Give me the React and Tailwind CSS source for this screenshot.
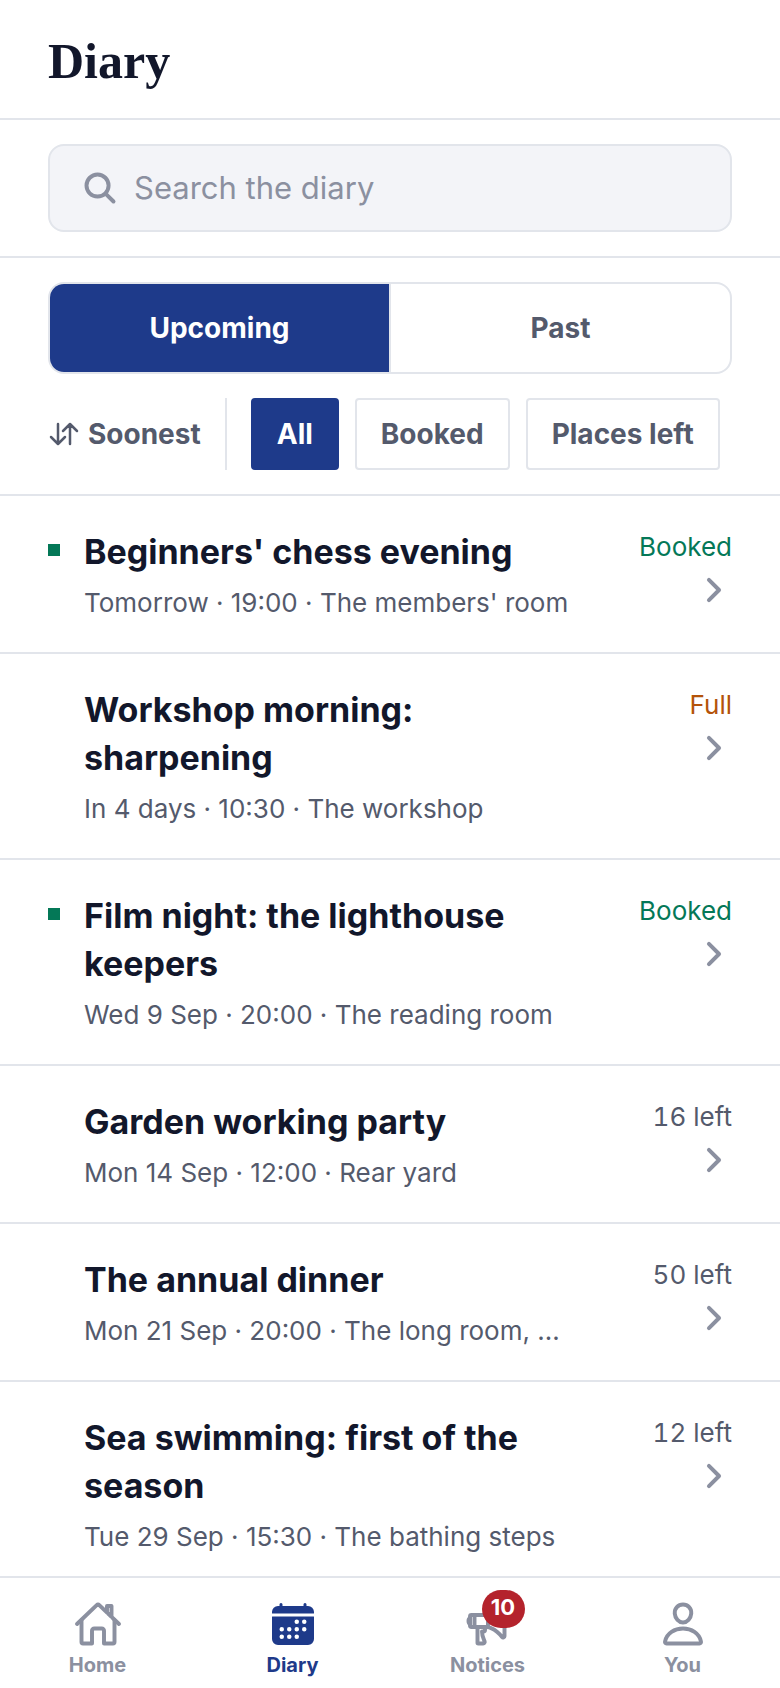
import {
  IoCalendar,
  IoChevronForwardOutline,
  IoHomeOutline,
  IoMegaphoneOutline,
  IoPersonOutline,
  IoSearchOutline,
  IoSwapVerticalOutline,
} from 'react-icons/io5';

const events = [
  {
    title: "Beginners' chess evening",
    meta: "Tomorrow · 19:00 · The members' room",
    status: 'Booked',
    tone: 'green',
  },
  {
    title: 'Workshop morning: sharpening',
    meta: 'In 4 days · 10:30 · The workshop',
    status: 'Full',
    tone: 'amber',
  },
  {
    title: 'Film night: the lighthouse keepers',
    meta: 'Wed 9 Sep · 20:00 · The reading room',
    status: 'Booked',
    tone: 'green',
  },
  {
    title: 'Garden working party',
    meta: 'Mon 14 Sep · 12:00 · Rear yard',
    status: '16 left',
    tone: 'gray',
  },
  {
    title: 'The annual dinner',
    meta: 'Mon 21 Sep · 20:00 · The long room, …',
    status: '50 left',
    tone: 'gray',
  },
  {
    title: 'Sea swimming: first of the season',
    meta: 'Tue 29 Sep · 15:30 · The bathing steps',
    status: '12 left',
    tone: 'gray',
  },
];

const toneClasses = {
  green: 'text-[#047857]',
  amber: 'text-[#b45309]',
  gray: 'text-[#545a6c]',
};

const tabs = [
  { label: 'Home', icon: IoHomeOutline },
  { label: 'Diary', icon: IoCalendar, active: true },
  { label: 'Notices', icon: IoMegaphoneOutline, badge: 10 },
  { label: 'You', icon: IoPersonOutline },
];

function Chip({ children, active = false }) {
  const stateClasses = active
    ? 'border-[#1e3a8a] bg-[#1e3a8a] text-white'
    : 'border-[#e2e5eb] bg-white text-[#545a6c]';

  return (
    <button
      type="button"
      aria-pressed={active}
      className={`h-[72px] shrink-0 rounded border-2 px-6 text-[28px] font-bold ${stateClasses}`}
    >
      {children}
    </button>
  );
}

function EventRow({ event }) {
  return (
    <li className="border-b-2 border-[#e2e5eb]">
      <a href="#event" className="flex items-start gap-6 px-12 pt-8 pb-[30px]">
        <div className="flex w-3 shrink-0 pt-4">
          {event.status === 'Booked' && <span className="size-3 bg-[#047857]" />}
        </div>
        <div className="min-w-0 flex-1">
          <h2 className="text-[34px] leading-[48px] font-bold">{event.title}</h2>
          <p className="mt-2 truncate text-[26px] leading-[38px] text-[#545a6c]">{event.meta}</p>
        </div>
        <div className="flex w-32 shrink-0 flex-col items-end gap-1.5">
          <span className={`text-[26px] leading-[38px] tabular-nums ${toneClasses[event.tone]}`}>
            {event.status}
          </span>
          <IoChevronForwardOutline className="size-9 text-[#8b90a0] [&_*]:stroke-[56px]" />
        </div>
      </a>
    </li>
  );
}

function TabBar() {
  return (
    <nav className="grid shrink-0 grid-cols-4 border-t-2 border-[#e2e5eb] bg-white pt-[22px] pb-[10px]">
      {tabs.map(({ label, icon: Icon, active, badge }) => (
        <a
          key={label}
          href={`#${label.toLowerCase()}`}
          className={`flex flex-col items-center gap-1 ${active ? 'text-[#1e3a8a]' : 'text-[#8b90a0]'}`}
        >
          <span className="relative">
            <Icon className={`size-12 ${active ? '' : '[&_*]:stroke-[42px]'}`} />
            {badge && (
              <span className="absolute -top-[10px] left-[18px] flex h-[38px] min-w-[43px] items-center justify-center rounded-full bg-[#b4232c] px-2 pb-1 text-[22px] font-bold text-white">
                {badge}
              </span>
            )}
          </span>
          <span className="text-[20px] leading-[26px] font-bold">{label}</span>
        </a>
      ))}
    </nav>
  );
}

export default function App() {
  return (
    <div className="flex h-screen flex-col bg-white font-[Inter,'Liberation_Sans',sans-serif] text-[#12172b]">
      <header className="shrink-0 border-b-2 border-[#e2e5eb] px-12 pt-[34px] pb-[30px]">
        <h1 className="font-['Liberation_Serif',serif] text-[50px] leading-[54px] font-bold">Diary</h1>
      </header>

      <div className="shrink-0 border-b-2 border-[#e2e5eb] px-12 py-6">
        <label className="flex h-[88px] items-center gap-4 rounded-2xl border-2 border-[#e2e5eb] bg-[#f3f4f8] px-8">
          <IoSearchOutline className="size-9 shrink-0 text-[#8b90a0] [&_*]:stroke-[56px]" />
          <input
            type="search"
            aria-label="Search the diary"
            placeholder="Search the diary"
            className="w-full bg-transparent text-[31px] outline-none placeholder:text-[#8b90a0]"
          />
        </label>
      </div>

      <div className="flex shrink-0 flex-col gap-6 border-b-2 border-[#e2e5eb] px-12 py-6">
        <div className="flex h-[92px] overflow-hidden rounded-2xl border-2 border-[#e2e5eb] text-[28px] font-bold">
          <button type="button" className="flex-1 bg-[#1e3a8a] text-white">
            Upcoming
          </button>
          <button type="button" className="flex-1 border-l-2 border-[#e2e5eb] text-[#545a6c]">
            Past
          </button>
        </div>

        <div className="flex items-center gap-6">
          <button
            type="button"
            className="flex h-[72px] shrink-0 items-center gap-2 border-r-2 border-[#e2e5eb] pr-6 text-[28px] font-bold text-[#545a6c]"
          >
            <IoSwapVerticalOutline className="size-8 [&_*]:stroke-[40px]" />
            Soonest
          </button>
          <div className="flex gap-4">
            <Chip active>All</Chip>
            <Chip>Booked</Chip>
            <Chip>Places left</Chip>
          </div>
        </div>
      </div>

      <ul className="min-h-0 flex-1 overflow-hidden">
        {events.map((event) => (
          <EventRow key={event.title} event={event} />
        ))}
      </ul>

      <TabBar />
    </div>
  );
}
